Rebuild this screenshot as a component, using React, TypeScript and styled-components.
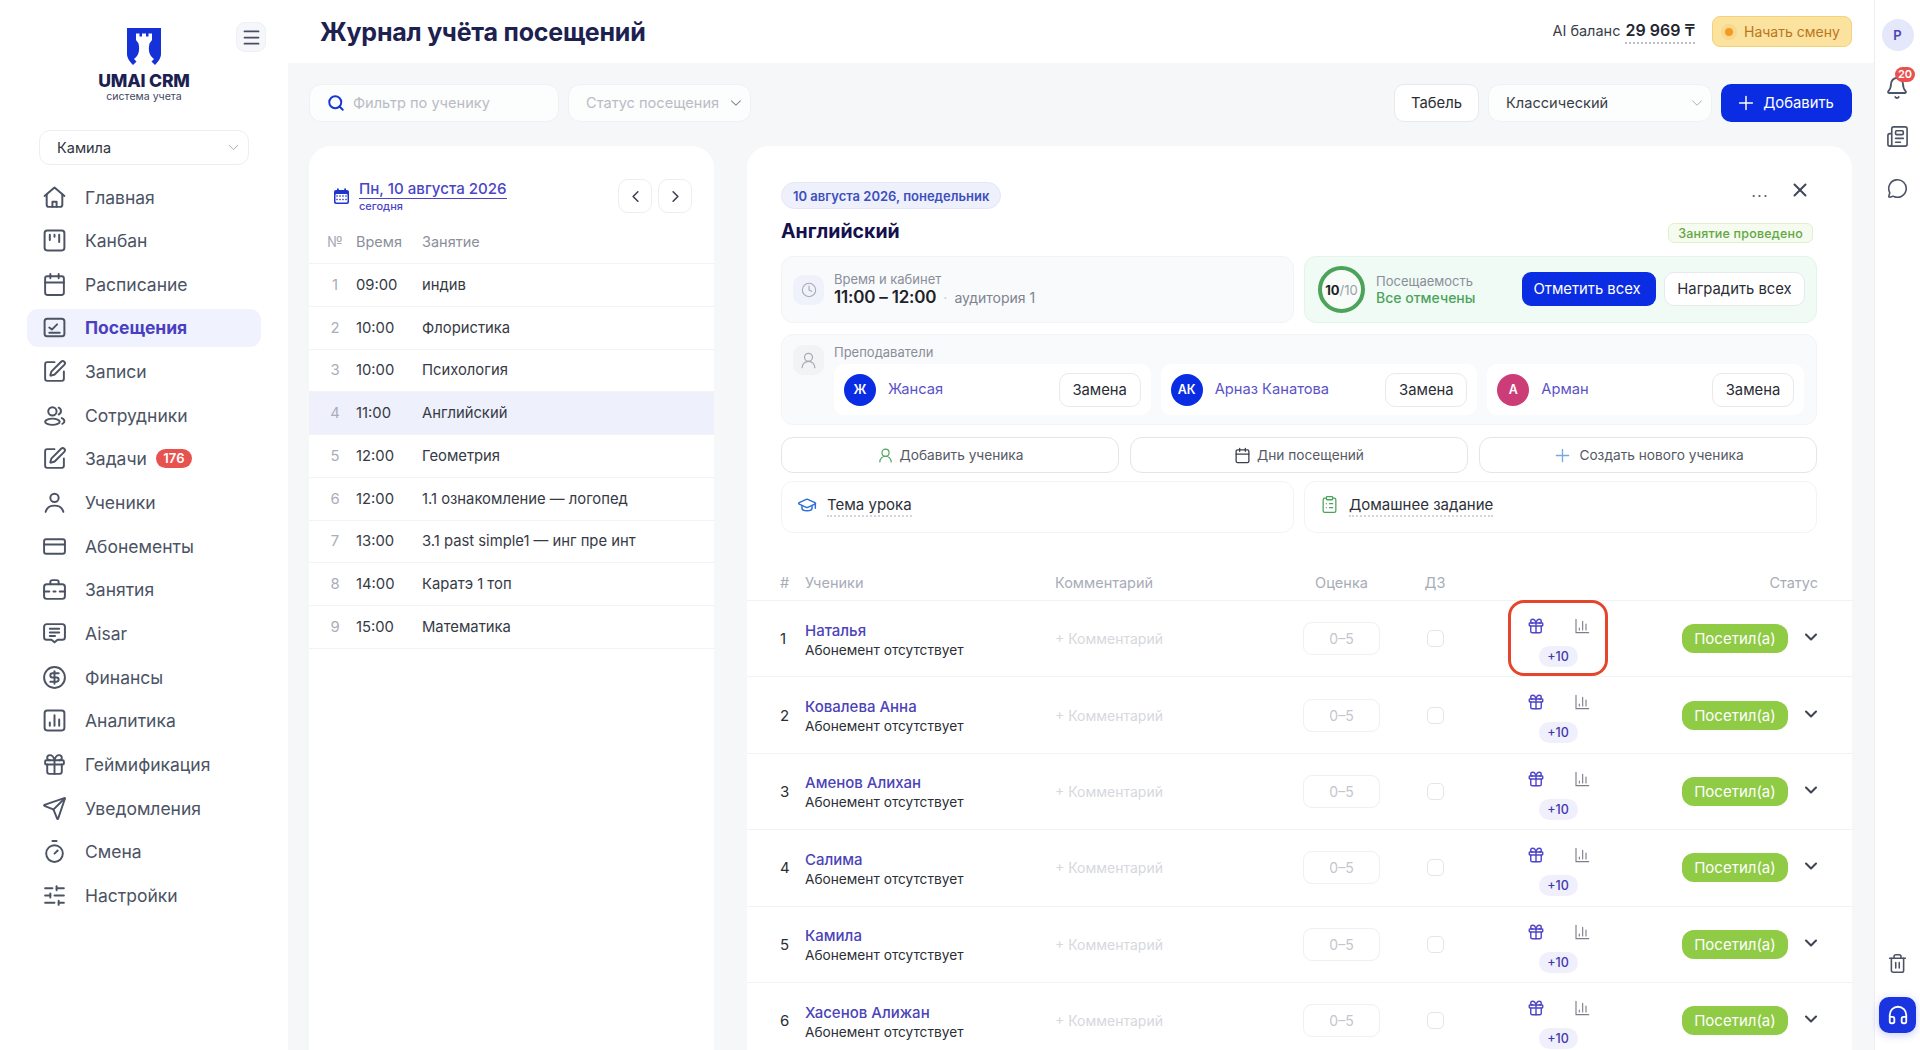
import React from "react";
import styled, { createGlobalStyle } from "styled-components";
import {
  Bell, Newspaper, MessageCircle, Trash2, Headphones, Search, ChevronDown, ChevronLeft, ChevronRight,
  Plus, X, Clock, UserRound, Gift, GraduationCap, ClipboardList, Calendar, Menu, Send, Timer,
  SlidersHorizontal, CircleDollarSign, CreditCard, SquarePen,
} from "lucide-react";

const GlobalStyle = createGlobalStyle`
  html, body { margin: 0; padding: 0; height: 100%; overflow: hidden; background: #fff; }
  body { font-family: "Inter", "Noto Sans", sans-serif; color: #23262f; }
  * { box-sizing: border-box; }
`;

const Page = styled.div`
  display: flex;
  width: 1920px;
  height: 1050px;
  overflow: hidden;
`;

/* ---------- Sidebar ---------- */
const Sidebar = styled.aside`
  flex: 0 0 288px;
  display: flex;
  flex-direction: column;
  background: #fff;
`;
const BrandRow = styled.div`
  display: grid;
  grid-template-columns: 1fr auto 1fr;
  padding: 22px 22px 0;
  height: 130px;
`;
const Brand = styled.div`
  grid-column: 2;
  display: flex;
  flex-direction: column;
  align-items: center;
  padding-top: 6px;
`;
const BrandName = styled.div`
  margin-top: 6px;
  font-size: 17.6px;
  line-height: 20px;
  font-weight: 800;
  letter-spacing: -0.2px;
  color: #1c1f52;
`;
const BrandSub = styled.div`
  font-size: 10.6px;
  line-height: 11px;
  color: #43475f;
`;
const Burger = styled.button`
  grid-column: 3;
  justify-self: end;
  width: 30px;
  height: 30px;
  display: flex;
  align-items: center;
  justify-content: center;
  padding: 0;
  border: 1px solid #eef0f4;
  border-radius: 9px;
  background: #f5f7fa;
  color: #474d63;
`;
const SideSelect = styled.div`
  margin: 0 39px;
  height: 35px;
  padding: 0 6px 0 17px;
  display: flex;
  align-items: center;
  justify-content: space-between;
  border: 1px solid #eceef2;
  border-radius: 11px;
  font-size: 14.5px;
  color: #30343e;
`;
const Nav = styled.nav`
  margin-top: 13px;
  padding: 0 27px;
  display: flex;
  flex-direction: column;
  gap: 5.67px;
`;
const NavItem = styled.a<{ $active?: boolean }>`
  display: flex;
  align-items: center;
  height: 38px;
  padding-left: 16px;
  gap: 20px;
  border-radius: 11px;
  font-size: 17.5px;
  font-weight: ${(p) => (p.$active ? 700 : 400)};
  color: ${(p) => (p.$active ? "#4a3fc0" : "#4b5364")};
  background: ${(p) => (p.$active ? "#f0f3fd" : "transparent")};
`;
const NavIcon = styled.span`
  flex: 0 0 22px;
  width: 22px;
  min-width: 0;
  display: flex;
  justify-content: center;
  color: #4b5364;
  svg { flex-shrink: 0; }
`;
const NavBadge = styled.span`
  margin-left: -11px;
  width: 36px;
  height: 19px;
  border-radius: 10px;
  background: #e8524e;
  color: #fff;
  font-size: 13px;
  font-weight: 600;
  text-align: center;
  line-height: 19px;
`;

/* ---------- Main ---------- */
const Main = styled.main`
  flex: 1;
  min-width: 0;
  display: flex;
  flex-direction: column;
`;
const TopBar = styled.header`
  flex: 0 0 63px;
  display: flex;
  align-items: center;
  padding: 0 22px 0 32px;
  background: #fff;
`;
const PageTitle = styled.h1`
  margin: 0 auto 0 0;
  font-size: 25px;
  font-weight: 700;
  letter-spacing: -0.2px;
  color: #1c2150;
`;
const Balance = styled.div`
  display: flex;
  align-items: baseline;
  gap: 5px;
  font-size: 14.5px;
  color: #3a3e49;
  margin-right: 17px;
`;
const BalanceValue = styled.span`
  font-size: 16px;
  font-weight: 600;
  color: #23262f;
  padding-bottom: 2px;
  border-bottom: 2px dotted #b9bdc7;
`;
const ShiftButton = styled.button`
  width: 140px;
  height: 31px;
  display: flex;
  align-items: center;
  gap: 7px;
  padding: 0 0 0 8px;
  border: 1px solid #f3d27c;
  border-radius: 8px;
  background: #fbe29e;
  color: #b8771f;
  font: 400 14px "Inter", sans-serif;
`;
const ShiftDot = styled.span`
  width: 16px;
  height: 16px;
  border-radius: 50%;
  background: #f9d98d;
  display: flex;
  align-items: center;
  justify-content: center;
  &::after {
    content: "";
    width: 8px;
    height: 8px;
    border-radius: 50%;
    background: #f39a24;
  }
`;
const Workspace = styled.div`
  flex: 1;
  min-height: 0;
  display: flex;
  flex-direction: column;
  gap: 24px;
  padding: 21px 22px 0 21px;
  background: #f5f7f9;
`;
const Toolbar = styled.div`
  flex: 0 0 38px;
  display: flex;
  gap: 9px;
`;
const Field = styled.div<{ $w: number; $muted?: boolean }>`
  width: ${(p) => p.$w}px;
  height: 38px;
  display: flex;
  align-items: center;
  gap: 8px;
  padding: 0 5px 0 17px;
  background: #fcfdfd;
  border: 1px solid #eff1f4;
  border-radius: 12px;
  font-size: 14.6px;
  color: ${(p) => (p.$muted ? "#b9bcc4" : "#3b3f49")};
  white-space: nowrap;
`;
const FieldText = styled.span`
  flex: 1;
`;
const PlainButton = styled.button<{ $w?: number; $h?: number }>`
  width: ${(p) => (p.$w ? `${p.$w}px` : "auto")};
  height: ${(p) => p.$h ?? 38}px;
  padding: 0;
  background: #fff;
  border: 1px solid #e7e9ed;
  border-radius: 10px;
  color: #2a2d35;
  font: 400 14.8px "Inter", sans-serif;
`;
const ToolbarSpacer = styled.div`
  flex: 1;
`;
const PrimaryButton = styled.button<{ $w: number; $h: number; $r: number }>`
  width: ${(p) => p.$w}px;
  height: ${(p) => p.$h}px;
  display: flex;
  align-items: center;
  justify-content: center;
  gap: 6px;
  padding: 0 4px 0 0;
  background: #0a2de3;
  border: 0;
  border-radius: ${(p) => p.$r}px;
  color: #fff;
  font: 400 14.8px "Inter", sans-serif;
`;
const Columns = styled.div`
  flex: 1;
  min-height: 0;
  display: flex;
  gap: 33px;
`;
const Card = styled.section`
  background: #fff;
  border-radius: 22px 22px 0 0;
  overflow: hidden;
`;
const LessonsCard = styled(Card)`
  flex: 0 0 405px;
  padding-top: 33px;
`;
const DateBar = styled.div`
  display: flex;
  align-items: center;
  height: 34px;
  padding: 0 22px 0 24px;
  gap: 9px;
`;
const DateBlock = styled.div`
  margin-right: auto;
  display: flex;
  flex-direction: column;
`;
const DateLink = styled.span`
  font-size: 15.1px;
  line-height: 19px;
  font-weight: 500;
  color: #4a45c8;
  border-bottom: 1px solid #4a45c8;
  align-self: flex-start;
`;
const DateSub = styled.span`
  font-size: 11px;
  line-height: 14px;
  font-weight: 500;
  color: #4a45c8;
`;
const ArrowButton = styled.button`
  width: 34px;
  height: 34px;
  display: flex;
  align-items: center;
  justify-content: center;
  margin-left: -3px;
  padding: 0;
  background: #fff;
  border: 1px solid #eceef1;
  border-radius: 10px;
  color: #3c4150;
`;
const LessonGrid = styled.div<{ $head?: boolean; $active?: boolean }>`
  display: grid;
  grid-template-columns: 20px 55px 1fr;
  column-gap: 11px;
  align-items: center;
  height: ${(p) => (p.$head ? "42px" : "42.75px")};
  padding: ${(p) => (p.$head ? "0 0 2px 16px" : "0 0 0 16px")};
  border-bottom: 1px solid #f2f3f6;
  font-size: 14.8px;
  color: ${(p) => (p.$head ? "#8b8f9b" : "#363a44")};
  background: ${(p) => (p.$active ? "#eef1fc" : "transparent")};
`;
const LessonsHead = styled(LessonGrid)`
  margin-top: 9px;
  font-size: 14.5px;
`;
const LessonNum = styled.span`
  text-align: center;
  color: #a9adba;
`;

/* ---------- Detail card ---------- */
const DetailCard = styled(Card)`
  flex: 1;
  min-width: 0;
  padding-top: 36px;
`;
const DetailBody = styled.div`
  padding: 0 35px 0 34px;
  display: flex;
  flex-direction: column;
`;
const DetailHead = styled.div`
  display: flex;
  justify-content: space-between;
  padding-right: 4px;
`;
const HeadLeft = styled.div`
  display: flex;
  flex-direction: column;
  align-items: flex-start;
  gap: 9px;
`;
const DatePill = styled.span`
  height: 27px;
  padding: 0 11px;
  display: flex;
  align-items: center;
  border: 1px solid #e3e6f8;
  border-radius: 14px;
  background: #eef0fc;
  font-size: 13px;
  font-weight: 600;
  color: #3d4fbd;
`;
const LessonTitle = styled.h2`
  margin: 0;
  font-size: 19.5px;
  line-height: 26px;
  font-weight: 700;
  color: #14104f;
`;
const HeadRight = styled.div`
  display: flex;
  flex-direction: column;
  align-items: flex-end;
  justify-content: space-between;
  padding-bottom: 1px;
  margin-top: -4px;
`;
const HeadActions = styled.div`
  display: flex;
  align-items: center;
  gap: 20px;
  margin-right: 2px;
  color: #41475a;
`;
const Dots = styled.span`
  font-size: 15px;
  letter-spacing: 1.5px;
  margin-top: 4px;
  color: #5a6070;
`;
const DoneBadge = styled.span`
  height: 20px;
  padding: 0 9px;
  display: flex;
  align-items: center;
  border: 1px solid #e0f0cf;
  border-radius: 6px;
  background: #f6fbef;
  font-size: 12.5px;
  font-weight: 500;
  letter-spacing: 0.2px;
  color: #62a844;
`;
const InfoRow = styled.div`
  margin-top: 12px;
  display: grid;
  grid-template-columns: 1fr 1fr;
  gap: 10px;
`;
const InfoBox = styled.div`
  height: 67px;
  display: flex;
  align-items: center;
  padding: 0 11px;
  gap: 10px;
  background: #f8fafc;
  border: 1px solid #f1f3f6;
  border-radius: 12px;
`;
const AttendBox = styled(InfoBox)`
  background: #f0fbf5;
  border-color: #e4f4ea;
  padding-left: 13px;
  gap: 11px;
`;
const IconTile = styled.div<{ $bg: string }>`
  flex: 0 0 31px;
  width: 31px;
  height: 30px;
  display: flex;
  align-items: center;
  justify-content: center;
  border-radius: 10px;
  background: ${(p) => p.$bg};
  color: #a5a9b6;
`;
const InfoCol = styled.div`
  display: flex;
  flex-direction: column;
`;
const InfoLabel = styled.span`
  font-size: 13px;
  line-height: 15px;
  color: #8a8e99;
`;
const TimeLine = styled.div`
  display: flex;
  align-items: center;
  gap: 7px;
`;
const TimeValue = styled.span`
  font-size: 17px;
  line-height: 20px;
  font-weight: 600;
  letter-spacing: -0.2px;
  color: #1f2229;
`;
const RoomText = styled.span`
  font-size: 14px;
  color: #7f838e;
  &::before {
    content: "·";
    margin-right: 7px;
    color: #c6c9d0;
  }
`;
const Ring = styled.div`
  flex: 0 0 47px;
  height: 47px;
  display: flex;
  align-items: center;
  justify-content: center;
  border: 4px solid #4ea35b;
  border-radius: 50%;
  background: #f7fcf8;
  font-size: 13px;
  color: #9aa0a8;
  white-space: nowrap;
  b { font-weight: 700; color: #1d1f25; }
`;
const AttendStatus = styled.span`
  font-size: 14px;
  line-height: 17px;
  font-weight: 500;
  color: #4ea35b;
`;
const AttendActions = styled.div`
  margin-left: auto;
  display: flex;
  gap: 8px;
  margin-top: -1px;
`;
const TeachersBox = styled.div`
  margin-top: 11px;
  height: 91px;
  display: flex;
  gap: 10px;
  padding: 10px 12px 0 11px;
  background: #f8fafb;
  border: 1px solid #f2f4f6;
  border-radius: 12px;
`;
const TeachersCol = styled.div`
  flex: 1;
  min-width: 0;
  display: flex;
  flex-direction: column;
  gap: 4px;
`;
const TeacherList = styled.div`
  display: grid;
  grid-template-columns: repeat(3, 1fr);
  gap: 10px;
`;
const TeacherCard = styled.div`
  height: 51px;
  display: flex;
  align-items: center;
  gap: 12px;
  padding: 0 10px;
  background: #fff;
  border-radius: 10px;
`;
const Avatar = styled.div<{ $bg: string }>`
  flex: 0 0 32px;
  height: 32px;
  display: flex;
  align-items: center;
  justify-content: center;
  border-radius: 50%;
  background: ${(p) => p.$bg};
  color: #fff;
  font-size: 12.5px;
  font-weight: 600;
`;
const TeacherName = styled.span`
  margin: -1px auto 0 0;
  font-size: 14.7px;
  color: #5b52c7;
`;
const ActionRow = styled.div`
  margin-top: 12px;
  display: grid;
  grid-template-columns: repeat(3, 1fr);
  gap: 11px;
`;
const OutlineAction = styled.button`
  height: 36px;
  display: flex;
  align-items: center;
  justify-content: center;
  gap: 6px;
  padding: 0;
  background: #fff;
  border: 1px solid #e3e5ea;
  border-radius: 12px;
  color: #565a64;
  font: 400 13.7px "Inter", sans-serif;
`;
const NotesRow = styled.div`
  margin-top: 8px;
  display: grid;
  grid-template-columns: 1fr 1fr;
  gap: 10px;
`;
const NoteBox = styled.div`
  height: 52px;
  display: flex;
  align-items: flex-start;
  gap: 10px;
  padding: 13px 0 0 15px;
  background: #fff;
  border: 1px solid #f2f3f6;
  border-radius: 12px;
`;
const NoteText = styled.span`
  font-size: 15px;
  line-height: 20px;
  color: #2d3038;
  border-bottom: 2px dotted #d3d5dc;
`;

/* ---------- Students table ---------- */
const rowColumns = "25px 250px 248px 77px 110px 18px 100px 180px 48px";
const TableHead = styled.div`
  margin-top: 32px;
  height: 36px;
  display: grid;
  grid-template-columns: ${rowColumns};
  align-items: center;
  padding-left: 33px;
  border-bottom: 1px solid #f1f2f5;
  font-size: 14.5px;
  color: #a8acb8;
`;
const HeadCenter = styled.span`
  text-align: center;
`;
const HeadStatus = styled.span`
  grid-column: 8 / 10;
  text-align: right;
  padding-right: 18px;
`;
const StudentRow = styled.div`
  height: 76.4px;
  display: grid;
  grid-template-columns: ${rowColumns};
  align-items: center;
  padding-left: 33px;
  border-bottom: 1px solid #f1f2f5;
`;
const RowNum = styled.span`
  font-size: 15px;
  color: #2b2e36;
`;
const StudentCell = styled.div`
  display: flex;
  flex-direction: column;
  margin-top: 2px;
`;
const StudentName = styled.span`
  font-size: 15px;
  line-height: 20px;
  font-weight: 500;
  color: #4b43b8;
`;
const StudentSub = styled.span`
  font-size: 13.7px;
  line-height: 18px;
  color: #2b2e36;
`;
const CommentLink = styled.span`
  font-size: 14px;
  color: #d6d8dd;
`;
const GradeInput = styled.div`
  height: 33px;
  display: flex;
  align-items: center;
  justify-content: center;
  border: 1px solid #eff0f3;
  border-radius: 9px;
  font-size: 14px;
  color: #c3c6cd;
`;
const CheckBox = styled.div`
  justify-self: center;
  width: 17px;
  height: 17px;
  border: 1px solid #e3e5ea;
  border-radius: 5px;
`;
const AwardsCell = styled.div<{ $marked?: boolean }>`
  grid-column: 7;
  position: relative;
  align-self: stretch;
  display: flex;
  flex-direction: column;
  align-items: center;
  gap: 11px;
  padding-top: 16px;
  &::after {
    content: "";
    display: ${(p) => (p.$marked ? "block" : "none")};
    position: absolute;
    inset: -1px 0 0 0;
    border: 3px solid #e5452a;
    border-radius: 16px;
  }
`;
const AwardIcons = styled.div`
  width: 63px;
  display: flex;
  justify-content: space-between;
  align-items: center;
`;
const PointsPill = styled.span`
  width: 39px;
  height: 21px;
  display: flex;
  align-items: center;
  justify-content: center;
  border-radius: 11px;
  background: #eff0fb;
  font-size: 12.5px;
  font-weight: 500;
  color: #4338b0;
`;
const StatusCell = styled.div`
  display: flex;
  justify-content: flex-end;
`;
const StatusPill = styled.span`
  width: 106px;
  height: 29px;
  display: flex;
  align-items: center;
  justify-content: center;
  border-radius: 12px;
  background: #8fcb45;
  color: #fff;
  font-size: 15px;
`;
const ExpandCell = styled.div`
  display: flex;
  justify-content: center;
  margin: -3px 0 0 -2px;
  color: #3f4454;
`;

/* ---------- Right rail ---------- */
const Rail = styled.aside`
  flex: 0 0 46px;
  display: flex;
  flex-direction: column;
  align-items: center;
  padding: 19px 0 17px;
  background: #fff;
  border-left: 1px solid #eceef1;
  color: #4b5364;
`;
const UserChip = styled.div`
  width: 32px;
  height: 32px;
  display: flex;
  align-items: center;
  justify-content: center;
  border-radius: 50%;
  background: #e4e8fa;
  color: #4b43b8;
  font-size: 13px;
  font-weight: 600;
`;
const RailIcon = styled.div<{ $mt: number }>`
  position: relative;
  display: flex;
  justify-content: center;
  width: 24px;
  margin-top: ${(p) => p.$mt}px;
  margin-left: -1px;
  height: 24px;
`;
const BellBadge = styled.span`
  position: absolute;
  top: -9px;
  left: 10px;
  width: 20px;
  height: 15px;
  border-radius: 8px;
  background: #e8524e;
  color: #fff;
  font-size: 11px;
  font-weight: 600;
  line-height: 15px;
  text-align: center;
`;
const HelpButton = styled.div`
  margin-top: 23px;
  width: 37px;
  height: 36px;
  display: flex;
  align-items: center;
  justify-content: center;
  border-radius: 10px;
  background: #1a35e0;
  box-shadow: 0 2px 8px rgba(26, 53, 224, 0.25);
  color: #fff;
`;
const RailSpacer = styled.div`
  flex: 1;
`;

/* ---------- Drawn icons ---------- */
const Svg: React.FC<{ size?: number; color?: string; sw?: number; children: React.ReactNode }> = ({ size = 25, color = "currentColor", sw = 1.9, children }) => (
  <svg width={size} height={size} viewBox="0 0 24 24" fill="none" stroke={color} strokeWidth={sw} strokeLinecap="round" strokeLinejoin="round">
    {children}
  </svg>
);

const HomeI = () => <Svg><path d="M2.500 10.500 12 2.500l9.500 8" /><path d="M4.500 9V19a2 2 0 0 0 2 2h11a2 2 0 0 0 2-2V9" /><path d="M10 21v-5h4v5" /></Svg>;
const KanbanI = () => <Svg><rect x="2.500" y="2.500" width="19" height="19" rx="2.500" /><path d="M7.500 6.500v5M12 6.500v2M16.500 6.500v7" /></Svg>;
const AttendI = () => <Svg><rect x="2.500" y="3.500" width="19" height="17" rx="2.500" /><path d="M7 12l2.500 2 5-5M7 17h10" /></Svg>;
const TeamI = () => <Svg><circle cx="10" cy="8" r="4" /><ellipse cx="10" cy="18" rx="7" ry="3" /><path d="M16 4.500a3.500 3.500 0 0 1 0 6.500M19 14.500c1.500.6 2.500 1.700 2.500 3s-.8 2-2 2.500" /></Svg>;
const PersonI = () => <Svg><circle cx="12" cy="7.500" r="4" /><path d="M3.500 21c1-4 4.500-6 8.500-6s7.500 2 8.500 6" /></Svg>;
const CaseI = () => <Svg><rect x="2" y="7" width="20" height="14" rx="2.500" /><path d="M8 7V5a2 2 0 0 1 2-2h4a2 2 0 0 1 2 2v2M2 14h5M11 14h2M17 14h5" /></Svg>;
const NoteChatI = () => <Svg><path d="M4.500 3h15A2.500 2.500 0 0 1 22 5.500v10a2.500 2.500 0 0 1-2.500 2.500H15l-3 2.500L9 18H4.500A2.500 2.500 0 0 1 2 15.500v-10A2.500 2.500 0 0 1 4.500 3z" /><path d="M7.500 7.500h9M7.500 11h9M7.500 14.500h5" /></Svg>;
const BoxChartI = () => <Svg><rect x="2.500" y="2.500" width="19" height="19" rx="2.500" /><path d="M7.500 17v-3M12 17V7M16.500 17v-6" /></Svg>;
const MiniChart: React.FC = () => <Svg size={16} color="#7c7f8a" sw={1.7}><path d="M3 2v20h19" /><path d="M8 18v-3M13 18V5M18 18V9" /></Svg>;
const CalendarFill = () => (
  <svg width="17" height="17" viewBox="0 0 17 17">
    <rect x="1" y="2" width="15" height="14" rx="2" fill="#1d34cf" />
    <rect x="4" y="0.500" width="1.800" height="3" fill="#1d34cf" />
    <rect x="11.200" y="0.500" width="1.800" height="3" fill="#1d34cf" />
    <rect x="2.500" y="6" width="12" height="8.500" rx="1" fill="#fff" />
    {[4, 7, 10, 13].map((x) => [8, 11.500].map((y) => <rect key={`${x}-${y}`} x={x - 0.700} y={y - 0.700} width="1.400" height="1.400" fill="#1d34cf" />))}
  </svg>
);
const Logo = () => (
  <svg width="34" height="37" viewBox="0 0 34 37">
    <path d="M0 0H34V26C34 30 31 34 28 37L24.500 33.500L27 31C21 27 21.500 20 22.500 15.500L25 12V5.500H21.500V8.500H19V5.500H15V8.500H12.500V5.500H9V12L11.500 15.500C12.500 20 13 27 7 31L9.500 33.500L6 37C3 34 0 30 0 26Z" fill="#1432d8" />
  </svg>
);

const lucide = { size: 25, strokeWidth: 1.85 };
const navItems: { label: string; icon: React.ReactNode; active?: boolean; badge?: string }[] = [
  { label: "Главная", icon: <HomeI /> },
  { label: "Канбан", icon: <KanbanI /> },
  { label: "Расписание", icon: <Calendar {...lucide} /> },
  { label: "Посещения", icon: <AttendI />, active: true },
  { label: "Записи", icon: <SquarePen {...lucide} /> },
  { label: "Сотрудники", icon: <TeamI /> },
  { label: "Задачи", icon: <SquarePen {...lucide} />, badge: "176" },
  { label: "Ученики", icon: <PersonI /> },
  { label: "Абонементы", icon: <CreditCard {...lucide} /> },
  { label: "Занятия", icon: <CaseI /> },
  { label: "Aisar", icon: <NoteChatI /> },
  { label: "Финансы", icon: <CircleDollarSign {...lucide} /> },
  { label: "Аналитика", icon: <BoxChartI /> },
  { label: "Геймификация", icon: <Gift {...lucide} /> },
  { label: "Уведомления", icon: <Send {...lucide} /> },
  { label: "Смена", icon: <Timer {...lucide} /> },
  { label: "Настройки", icon: <SlidersHorizontal {...lucide} /> },
];

const lessons = [
  ["09:00", "индив"],
  ["10:00", "Флористика"],
  ["10:00", "Психология"],
  ["11:00", "Английский"],
  ["12:00", "Геометрия"],
  ["12:00", "1.1 ознакомление — логопед"],
  ["13:00", "3.1 past simple1 — инг пре инт"],
  ["14:00", "Каратэ 1 топ"],
  ["15:00", "Математика"],
];

const teachers = [
  { initials: "Ж", name: "Жансая", color: "#0a2de3" },
  { initials: "АК", name: "Арназ Канатова", color: "#0a2de3" },
  { initials: "А", name: "Арман", color: "#cc3d78" },
];

const students = ["Наталья", "Ковалева Анна", "Аменов Алихан", "Салима", "Камила", "Хасенов Алижан"];

export default function App() {
  return (
    <>
      <GlobalStyle />
      <Page>
        <Sidebar>
          <BrandRow>
            <Brand>
              <Logo />
              <BrandName>UMAI CRM</BrandName>
              <BrandSub>система учета</BrandSub>
            </Brand>
            <Burger><Menu size={21} strokeWidth={2} /></Burger>
          </BrandRow>
          <SideSelect>
            Камила
            <ChevronDown size={17} strokeWidth={1.2} color="#9a9ea8" />
          </SideSelect>
          <Nav>
            {navItems.map((n) => (
              <NavItem key={n.label} $active={n.active}>
                <NavIcon>{n.icon}</NavIcon>
                {n.label}
                {n.badge && <NavBadge>{n.badge}</NavBadge>}
              </NavItem>
            ))}
          </Nav>
        </Sidebar>

        <Main>
          <TopBar>
            <PageTitle>Журнал учёта посещений</PageTitle>
            <Balance>
              AI баланс <BalanceValue>29 969 ₸</BalanceValue>
            </Balance>
            <ShiftButton><ShiftDot />Начать смену</ShiftButton>
          </TopBar>

          <Workspace>
            <Toolbar>
              <Field $w={250} $muted>
                <Search size={18} strokeWidth={2.6} color="#1636d6" />
                <FieldText>Фильтр по ученику</FieldText>
              </Field>
              <Field $w={183} $muted>
                <FieldText>Статус посещения</FieldText>
                <ChevronDown size={18} strokeWidth={1.4} color="#868a94" />
              </Field>
              <ToolbarSpacer />
              <PlainButton $w={85}>Табель</PlainButton>
              <Field $w={224}>
                <FieldText>Классический</FieldText>
                <ChevronDown size={18} strokeWidth={1.2} color="#a5a8b1" />
              </Field>
              <PrimaryButton $w={131} $h={38} $r={10}>
                <Plus size={22} strokeWidth={1.6} />
                Добавить
              </PrimaryButton>
            </Toolbar>

            <Columns>
              <LessonsCard>
                <DateBar>
                  <CalendarFill />
                  <DateBlock>
                    <DateLink>Пн, 10 августа 2026</DateLink>
                    <DateSub>сегодня</DateSub>
                  </DateBlock>
                  <ArrowButton><ChevronLeft size={19} strokeWidth={2} /></ArrowButton>
                  <ArrowButton><ChevronRight size={19} strokeWidth={2} /></ArrowButton>
                </DateBar>
                <LessonsHead $head>
                  <LessonNum>№</LessonNum>
                  <span>Время</span>
                  <span>Занятие</span>
                </LessonsHead>
                {lessons.map(([time, name], i) => (
                  <LessonGrid key={i} $active={i === 3}>
                    <LessonNum>{i + 1}</LessonNum>
                    <span>{time}</span>
                    <span>{name}</span>
                  </LessonGrid>
                ))}
              </LessonsCard>

              <DetailCard>
                <DetailBody>
                  <DetailHead>
                    <HeadLeft>
                      <DatePill>10 августа 2026, понедельник</DatePill>
                      <LessonTitle>Английский</LessonTitle>
                    </HeadLeft>
                    <HeadRight>
                      <HeadActions>
                        <Dots>...</Dots>
                        <X size={22} strokeWidth={2.2} />
                      </HeadActions>
                      <DoneBadge>Занятие проведено</DoneBadge>
                    </HeadRight>
                  </DetailHead>

                  <InfoRow>
                    <InfoBox>
                      <IconTile $bg="#eff1fb"><Clock size={16} strokeWidth={1.6} /></IconTile>
                      <InfoCol>
                        <InfoLabel>Время и кабинет</InfoLabel>
                        <TimeLine>
                          <TimeValue>11:00 – 12:00</TimeValue>
                          <RoomText>аудитория 1</RoomText>
                        </TimeLine>
                      </InfoCol>
                    </InfoBox>
                    <AttendBox>
                      <Ring><b>10</b>/10</Ring>
                      <InfoCol>
                        <InfoLabel>Посещаемость</InfoLabel>
                        <AttendStatus>Все отмечены</AttendStatus>
                      </InfoCol>
                      <AttendActions>
                        <PrimaryButton $w={134} $h={34} $r={9}>Отметить всех</PrimaryButton>
                        <PlainButton $w={141} $h={34}>Наградить всех</PlainButton>
                      </AttendActions>
                    </AttendBox>
                  </InfoRow>

                  <TeachersBox>
                    <IconTile $bg="#f1f3f5"><UserRound size={19} strokeWidth={1.5} /></IconTile>
                    <TeachersCol>
                      <InfoLabel>Преподаватели</InfoLabel>
                      <TeacherList>
                        {teachers.map((t) => (
                          <TeacherCard key={t.name}>
                            <Avatar $bg={t.color}>{t.initials}</Avatar>
                            <TeacherName>{t.name}</TeacherName>
                            <PlainButton $w={82} $h={34}>Замена</PlainButton>
                          </TeacherCard>
                        ))}
                      </TeacherList>
                    </TeachersCol>
                  </TeachersBox>

                  <ActionRow>
                    <OutlineAction><UserRound size={17} strokeWidth={1.6} color="#4ea35b" />Добавить ученика</OutlineAction>
                    <OutlineAction><Calendar size={17} strokeWidth={1.8} color="#3a3e49" />Дни посещений</OutlineAction>
                    <OutlineAction><Plus size={21} strokeWidth={1.5} color="#7aa8e0" />Создать нового ученика</OutlineAction>
                  </ActionRow>

                  <NotesRow>
                    <NoteBox>
                      <GraduationCap size={20} strokeWidth={1.8} color="#2f6fd6" />
                      <NoteText>Тема урока</NoteText>
                    </NoteBox>
                    <NoteBox>
                      <ClipboardList size={19} strokeWidth={1.6} color="#4ea35b" />
                      <NoteText>Домашнее задание</NoteText>
                    </NoteBox>
                  </NotesRow>
                </DetailBody>

                <TableHead>
                  <span>#</span>
                  <span>Ученики</span>
                  <span>Комментарий</span>
                  <HeadCenter>Оценка</HeadCenter>
                  <HeadCenter>ДЗ</HeadCenter>
                  <HeadStatus>Статус</HeadStatus>
                </TableHead>
                {students.map((s, i) => (
                  <StudentRow key={s}>
                    <RowNum>{i + 1}</RowNum>
                    <StudentCell>
                      <StudentName>{s}</StudentName>
                      <StudentSub>Абонемент отсутствует</StudentSub>
                    </StudentCell>
                    <CommentLink>+ Комментарий</CommentLink>
                    <GradeInput>0–5</GradeInput>
                    <CheckBox />
                    <AwardsCell $marked={i === 0}>
                      <AwardIcons>
                        <Gift size={18} strokeWidth={1.9} color="#4f46c8" />
                        <MiniChart />
                      </AwardIcons>
                      <PointsPill>+10</PointsPill>
                    </AwardsCell>
                    <StatusCell><StatusPill>Посетил(а)</StatusPill></StatusCell>
                    <ExpandCell><ChevronDown size={20} strokeWidth={2.5} /></ExpandCell>
                  </StudentRow>
                ))}
              </DetailCard>
            </Columns>
          </Workspace>
        </Main>

        <Rail>
          <UserChip>Р</UserChip>
          <RailIcon $mt={25}>
            <Bell size={24} strokeWidth={1.8} />
            <BellBadge>20</BellBadge>
          </RailIcon>
          <RailIcon $mt={25}><Newspaper size={23} strokeWidth={1.7} /></RailIcon>
          <RailIcon $mt={29}><MessageCircle size={21} strokeWidth={1.8} /></RailIcon>
          <RailSpacer />
          <Trash2 size={21} strokeWidth={1.8} />
          <HelpButton><Headphones size={22} strokeWidth={2} /></HelpButton>
        </Rail>
      </Page>
    </>
  );
}
